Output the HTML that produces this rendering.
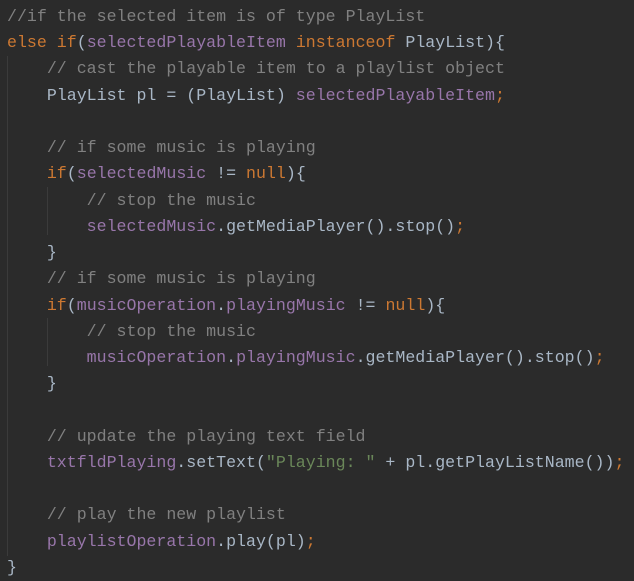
<!DOCTYPE html>
<html><head><style>
html,body{margin:0;padding:0;background:#2b2b2b;width:634px;height:577px;overflow:hidden}
pre{margin:0;position:absolute;left:7px;top:4px;font-family:"Liberation Mono",monospace;font-size:16.6px;line-height:26.24px;color:#a9b7c6}
.c{color:#808080}.k{color:#cc7832}.f{color:#9876aa}.s{color:#6a8759}
.g{position:absolute;width:1px;background:#3b3b3b}
</style></head><body>
<div class="g" style="left:7px;top:56px;height:500px"></div>
<div class="g" style="left:47px;top:187px;height:48px"></div>
<div class="g" style="left:47px;top:318px;height:48px"></div>
<pre><span class="c">//if the selected item is of type PlayList</span>
<span class="k">else if</span>(<span class="f">selectedPlayableItem</span> <span class="k">instanceof</span> PlayList){
    <span class="c">// cast the playable item to a playlist object</span>
    PlayList pl = (PlayList) <span class="f">selectedPlayableItem</span><span class="k">;</span>

    <span class="c">// if some music is playing</span>
    <span class="k">if</span>(<span class="f">selectedMusic</span> != <span class="k">null</span>){
        <span class="c">// stop the music</span>
        <span class="f">selectedMusic</span>.getMediaPlayer().stop()<span class="k">;</span>
    }
    <span class="c">// if some music is playing</span>
    <span class="k">if</span>(<span class="f">musicOperation</span>.<span class="f">playingMusic</span> != <span class="k">null</span>){
        <span class="c">// stop the music</span>
        <span class="f">musicOperation</span>.<span class="f">playingMusic</span>.getMediaPlayer().stop()<span class="k">;</span>
    }

    <span class="c">// update the playing text field</span>
    <span class="f">txtfldPlaying</span>.setText(<span class="s">"Playing: "</span> + pl.getPlayListName())<span class="k">;</span>

    <span class="c">// play the new playlist</span>
    <span class="f">playlistOperation</span>.play(pl)<span class="k">;</span>
}</pre>
</body></html>
